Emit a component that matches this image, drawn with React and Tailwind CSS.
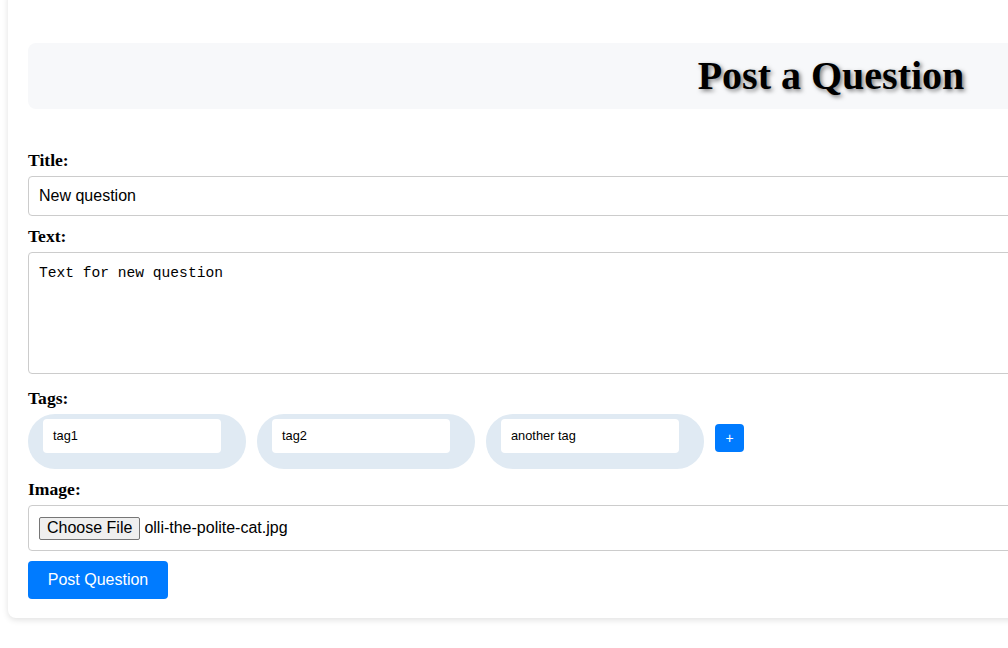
import React from "react";

export default function App() {
  const tags = ["tag1", "tag2", "another tag"];
  return (
    <div className="w-[1008px] h-[648px] overflow-hidden bg-white" style={{ fontFamily: '"Liberation Serif", serif' }}>
      <div className="ml-[8px] mt-[-12px] w-[1646px] rounded-[8px] bg-white shadow-[0_2px_6px_rgba(0,0,0,0.12)] px-[20px] pt-[55px] pb-[19px]">
        <div className="h-[66px] rounded-[8px] bg-[#f7f8fa] flex items-center justify-center">
          <h1 className="text-[40px] font-bold leading-none text-black [text-shadow:2px_2px_4px_rgba(0,0,0,0.5)]">Post a Question</h1>
        </div>

        <div className="mt-[41px] text-[17.6px] font-bold leading-[20px] text-black">Title:</div>
        <div className="mt-[6px] h-[40px] rounded-[4px] border border-[#cccccc] px-[10px] flex items-center text-[16px] text-black" style={{ fontFamily: '"Liberation Sans", Arial, sans-serif' }}>
          New question
        </div>

        <div className="mt-[10px] text-[17.6px] font-bold leading-[20px] text-black">Text:</div>
        <div className="mt-[6px] h-[122px] rounded-[4px] border border-[#cccccc] px-[10px] pt-[11px] text-[14.6px] leading-[18px] text-black" style={{ fontFamily: '"Liberation Mono", monospace' }}>
          Text for new question
        </div>

        <div className="mt-[14px] text-[17.6px] font-bold leading-[20px] text-black">Tags:</div>
        <div className="mt-[6px] flex items-start gap-[11px]" style={{ fontFamily: '"Liberation Sans", Arial, sans-serif' }}>
          {tags.map((t) => (
            <div key={t} className="w-[218px] h-[55px] rounded-[27px] bg-[#e0eaf3] pl-[15px] pr-[25px] pt-[5px]">
              <div className="h-[34px] rounded-[4px] bg-white px-[10px] flex items-center text-[12.8px] text-black">{t}</div>
            </div>
          ))}
          <div className="mt-[10px] w-[29px] h-[28px] rounded-[4px] bg-[#007bff] text-white text-[14px] flex items-center justify-center">+</div>
        </div>

        <div className="mt-[10px] text-[17.6px] font-bold leading-[20px] text-black">Image:</div>
        <div className="mt-[6px] h-[46px] rounded-[4px] border border-[#cccccc] px-[10px] flex items-center text-[16px] text-black" style={{ fontFamily: '"Liberation Sans", Arial, sans-serif' }}>
          <div className="h-[23px] px-[7px] flex items-center rounded-[2px] border border-[#767676] bg-[#efefef] text-[16px] text-black">Choose File</div>
          <span className="ml-[4px]">olli-the-polite-cat.jpg</span>
        </div>

        <div className="mt-[10px] w-[140px] h-[38px] rounded-[4px] bg-[#007bff] text-white text-[16px] flex items-center justify-center" style={{ fontFamily: '"Liberation Sans", Arial, sans-serif' }}>
          Post Question
        </div>
      </div>
    </div>
  );
}
